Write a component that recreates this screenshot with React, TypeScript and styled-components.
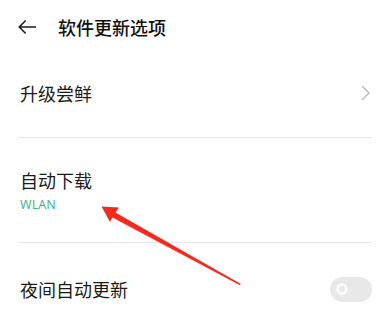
import React from "react";
import styled, { createGlobalStyle } from "styled-components";

const Global = createGlobalStyle`
  html, body { margin: 0; padding: 0; background: #ffffff; }
  body { font-family: "Noto Sans CJK SC", "Noto Sans", sans-serif; color: #1a1a1a; }
`;

const Page = styled.div`
  position: relative;
  width: 385px;
  height: 328px;
  overflow: hidden;
  background: #fff;
`;

const Header = styled.div`
  height: 54px;
  display: flex;
  align-items: center;
  padding-left: 18px;
  gap: 22px;
`;

const Title = styled.div`
  font-size: 18px;
  line-height: 24px;
  font-weight: 500;
  color: #111;
`;

const Row = styled.div<{ $h: number; $pb?: number }>`
  height: ${(p) => p.$h}px;
  box-sizing: border-box;
  padding: 0 13px ${(p) => p.$pb ?? 0}px 20px;
  display: flex;
  align-items: center;
  justify-content: space-between;
`;

const Divider = styled.div`
  height: 1px;
  margin: 0 13px 0 18px;
  background: #e6e6e6;
`;

const Texts = styled.div`
  display: flex;
  flex-direction: column;
  gap: 5px;
`;

const Label = styled.div`
  font-size: 18px;
  line-height: 24px;
  color: #1a1a1a;
`;

const Sub = styled.div`
  font-family: "Noto Sans", sans-serif;
  font-size: 12.5px;
  line-height: 16px;
  font-weight: 400;
  color: #3fb88a;
`;

const Toggle = styled.div`
  width: 42px;
  height: 25px;
  border-radius: 13px;
  background: #e8e8e8;
  display: flex;
  align-items: center;
  padding-left: 6px;
  box-sizing: border-box;
`;

const Knob = styled.div`
  width: 12px;
  height: 12px;
  border-radius: 50%;
  box-sizing: border-box;
  border: 3px solid #fafafa;
`;

const Overlay = styled.svg`
  position: absolute;
  left: 0;
  top: 0;
  pointer-events: none;
`;

export default function App() {
  return (
    <Page>
      <Global />
      <Header>
        <svg width="18" height="14" viewBox="0 0 18 14" fill="none">
          <path d="M17.5 7H1.2M7.2 1L1.2 7l6 6" stroke="#1a1a1a" strokeWidth="1.6" strokeLinecap="round" strokeLinejoin="round" />
        </svg>
        <Title>软件更新选项</Title>
      </Header>

      <Row $h={83} $pb={5}>
        <Label>升级尝鲜</Label>
        <svg width="10" height="16" viewBox="0 0 10 16" fill="none" style={{ marginRight: 1 }}>
          <path d="M1.5 1.5L8 8l-6.5 6.5" stroke="#bdbdbd" strokeWidth="1.5" strokeLinecap="round" strokeLinejoin="round" />
        </svg>
      </Row>
      <Divider />

      <Row $h={104}>
        <Texts>
          <Label>自动下载</Label>
          <Sub>WLAN</Sub>
        </Texts>
      </Row>
      <Divider />

      <Row $h={92}>
        <Label>夜间自动更新</Label>
        <Toggle>
          <Knob />
        </Toggle>
      </Row>

      <Overlay width="385" height="328" viewBox="0 0 385 328">
        <polygon
          points="101.5,206.5 119,207.5 115.5,212.5 241,284 239.5,285 112.5,217.5 110,222"
          fill="#f52a1f"
        />
      </Overlay>
    </Page>
  );
}
